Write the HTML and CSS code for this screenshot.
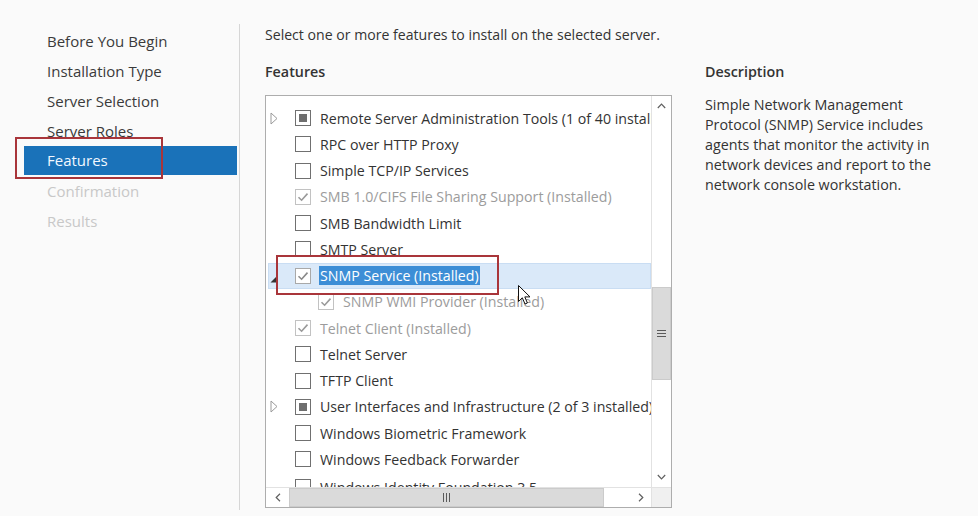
FILE: index.html
```html
<!DOCTYPE html>
<html>
<head>
<meta charset="utf-8">
<link rel="stylesheet" href="styles.css">
</head>
<body>
<div class="page">
  <nav class="nav">
    <div class="nav-item">Before You Begin</div>
    <div class="nav-item">Installation Type</div>
    <div class="nav-item">Server Selection</div>
    <div class="nav-item">Server Roles</div>
    <div class="nav-item active">Features</div>
    <div class="nav-item disabled">Confirmation</div>
    <div class="nav-item disabled">Results</div>
  </nav>
  <main class="main">
    <p class="intro">Select one or more features to install on the selected server.</p>
    <div class="cols">
      <section class="features">
        <h2 class="heading">Features</h2>
        <div class="listbox">
          <div class="list-content">
            <div class="row"><span class="exp"><svg width="8" height="13" viewBox="0 0 8 13"><path d="M1 1 L7 6.5 L1 12 Z" fill="none" stroke="#9a9a9a" stroke-width="1"/></svg></span><span class="cb partial"><i></i></span><span class="label">Remote Server Administration Tools (1 of 40 installed)</span></div>
            <div class="row"><span class="exp"></span><span class="cb"></span><span class="label">RPC over HTTP Proxy</span></div>
            <div class="row"><span class="exp"></span><span class="cb"></span><span class="label">Simple TCP/IP Services</span></div>
            <div class="row installed"><span class="exp"></span><span class="cb checked"><svg width="14" height="14" viewBox="0 0 14 14"><path d="M2.5 7.2 L5.6 10.2 L11.5 3.6" fill="none" stroke="#9a9a9a" stroke-width="1.6"/></svg></span><span class="label">SMB 1.0/CIFS File Sharing Support (Installed)</span></div>
            <div class="row"><span class="exp"></span><span class="cb"></span><span class="label">SMB Bandwidth Limit</span></div>
            <div class="row"><span class="exp"></span><span class="cb"></span><span class="label">SMTP Server</span></div>
            <div class="row selected"><span class="exp"><svg width="7" height="7" viewBox="0 0 7 7"><path d="M6.5 0.5 L6.5 6.5 L0.5 6.5 Z" fill="#333"/></svg></span><span class="cb checked sel-cb"><svg width="14" height="14" viewBox="0 0 14 14"><path d="M2.5 7.2 L5.6 10.2 L11.5 3.6" fill="none" stroke="#8a8a8a" stroke-width="1.6"/></svg></span><span class="label sel">SNMP Service (Installed)</span></div>
            <div class="row installed child"><span class="exp"></span><span class="cb checked"><svg width="14" height="14" viewBox="0 0 14 14"><path d="M2.5 7.2 L5.6 10.2 L11.5 3.6" fill="none" stroke="#9a9a9a" stroke-width="1.6"/></svg></span><span class="label">SNMP WMI Provider (Installed)</span></div>
            <div class="row installed"><span class="exp"></span><span class="cb checked"><svg width="14" height="14" viewBox="0 0 14 14"><path d="M2.5 7.2 L5.6 10.2 L11.5 3.6" fill="none" stroke="#9a9a9a" stroke-width="1.6"/></svg></span><span class="label">Telnet Client (Installed)</span></div>
            <div class="row"><span class="exp"></span><span class="cb"></span><span class="label">Telnet Server</span></div>
            <div class="row"><span class="exp"></span><span class="cb"></span><span class="label">TFTP Client</span></div>
            <div class="row"><span class="exp"><svg width="8" height="13" viewBox="0 0 8 13"><path d="M1 1 L7 6.5 L1 12 Z" fill="none" stroke="#9a9a9a" stroke-width="1"/></svg></span><span class="cb partial"><i></i></span><span class="label">User Interfaces and Infrastructure (2 of 3 installed)</span></div>
            <div class="row"><span class="exp"></span><span class="cb"></span><span class="label">Windows Biometric Framework</span></div>
            <div class="row"><span class="exp"></span><span class="cb"></span><span class="label">Windows Feedback Forwarder</span></div>
            <div class="row last"><span class="exp"></span><span class="cb"></span><span class="label">Windows Identity Foundation 3.5</span></div>
          </div>
          <div class="vscroll">
            <div class="sbtn"><svg width="9" height="6" viewBox="0 0 9 6"><path d="M0.8 5 L4.5 1.2 L8.2 5" fill="none" stroke="#606060" stroke-width="1.2"/></svg></div>
            <div class="vtrack">
              <div class="vthumb"><span class="grip-h"><i></i><i></i><i></i></span></div>
            </div>
            <div class="sbtn"><svg width="9" height="6" viewBox="0 0 9 6"><path d="M0.8 1 L4.5 4.8 L8.2 1" fill="none" stroke="#606060" stroke-width="1.2"/></svg></div>
          </div>
          <div class="hscroll">
            <div class="hbtn left"><svg width="6" height="9" viewBox="0 0 6 9"><path d="M5 0.8 L1.2 4.5 L5 8.2" fill="none" stroke="#606060" stroke-width="1.2"/></svg></div>
            <div class="htrack">
              <div class="hthumb"><span class="grip-v"><i></i><i></i><i></i></span></div>
            </div>
            <div class="hbtn right"><svg width="6" height="9" viewBox="0 0 6 9"><path d="M1 0.8 L4.8 4.5 L1 8.2" fill="none" stroke="#606060" stroke-width="1.2"/></svg></div>
          </div>
          <div class="corner"></div>
        </div>
      </section>
      <section class="desc">
        <h2 class="heading">Description</h2>
        <p class="desc-text">Simple Network Management Protocol (SNMP) Service includes agents that monitor the activity in network devices and report to the network console workstation.</p>
      </section>
    </div>
  </main>
</div>
<div class="annot annot-nav"></div>
<div class="annot annot-snmp"></div>
<svg class="cursor" width="14" height="21" viewBox="0 0 14 21"><path d="M0.5 0.5 L0.5 16.5 L4.3 12.8 L7 19 L9.4 18 L6.8 11.9 L12 11.9 Z" fill="#fff" stroke="#111" stroke-width="1" stroke-linejoin="round"/></svg>
</body>
</html>
```

FILE: styles.css
```css
html, body {
  margin: 0;
  padding: 0;
}
body {
  width: 978px;
  height: 516px;
  overflow: hidden;
  background: #fafafa;
  font-family: "Open Sans", "Noto Sans", sans-serif;
  font-size: 15px;
  color: #333;
  position: relative;
}
.page {
  display: flex;
  align-items: flex-start;
}
.nav {
  width: 240px;
  box-sizing: border-box;
  margin-top: 24px;
  height: 486px;
  padding-top: 2px;
  border-right: 1px solid #d6d6d6;
  flex: none;
}
.nav-item {
  height: 30px;
  line-height: 30px;
  margin-left: 24px;
  margin-right: 2px;
  padding-left: 23px;
  color: #3a3a3a;
  white-space: nowrap;
}
.nav-item.active {
  background: #1a72b9;
  color: #f2f8ff;
  height: 29px;
  line-height: 29px;
  margin-bottom: 1px;
}
.nav-item.disabled {
  color: #c8c8c8;
}
.main {
  padding-left: 25px;
  padding-top: 25px;
}
.intro {
  margin: 0;
  line-height: 20px;
  font-size: 14.1px;
  white-space: nowrap;
}
.cols {
  display: flex;
  margin-top: 17px;
}
.heading {
  margin: 0 0 13px;
  font-size: 14.3px;
  font-weight: 600;
  line-height: 20px;
  color: #333;
}
.listbox {
  display: grid;
  grid-template-columns: 385px 20px;
  grid-template-rows: 391px 20px;
  border: 1px solid #adadad;
  background: #fff;
  font-size: 14.2px;
}
.list-content {
  overflow: hidden;
  padding-top: 9px;
  box-sizing: border-box;
}
.row {
  height: 26.25px;
  display: flex;
  align-items: center;
  padding-left: 4px;
  white-space: nowrap;
  color: #333;
}
.row.last {
  padding-top: 3px;
  box-sizing: border-box;
}
.row.child {
  padding-left: 27px;
}
.row.installed {
  color: #9c9c9c;
}
.row.selected {
  margin-left: 2px;
  padding-left: 2px;
  background: #dae9f9;
  box-shadow: inset 0 0 0 1px #c9ddf3;
  color: #9c9c9c;
}
.exp {
  width: 25px;
  flex: none;
  display: flex;
  align-items: center;
}
.row.selected .exp {
  padding-top: 8px;
  box-sizing: border-box;
}
.cb {
  width: 16px;
  height: 16px;
  box-sizing: border-box;
  border: 1px solid #707070;
  margin-right: 9px;
  flex: none;
  display: flex;
  align-items: center;
  justify-content: center;
  background: #fff;
}
.cb.checked {
  border-color: #c2c2c2;
}
.cb.sel-cb {
  border-color: #a9a9a9;
}
.cb.partial i {
  display: block;
  width: 8px;
  height: 8px;
  background: #6e6e6e;
}
.label.sel {
  background: #3d8ed6;
  color: #fff;
  line-height: 19px;
  padding: 0 1px;
  margin-left: -1px;
}
.vscroll {
  display: flex;
  flex-direction: column;
  border-left: 1px solid #e2e2e2;
  box-sizing: border-box;
}
.sbtn {
  height: 20px;
  flex: none;
  display: flex;
  align-items: center;
  justify-content: center;
}
.vtrack {
  flex: 1;
  padding-top: 171px;
  box-sizing: border-box;
}
.vthumb {
  height: 93px;
  background: #dadada;
  border: 1px solid #cbcbcb;
  box-sizing: border-box;
  display: flex;
  align-items: center;
  justify-content: center;
}
.grip-h {
  display: flex;
  flex-direction: column;
  gap: 2px;
}
.grip-h i {
  display: block;
  width: 9px;
  height: 1px;
  background: #5a5a5a;
}
.hscroll {
  display: flex;
  border-top: 1px solid #e2e2e2;
  box-sizing: border-box;
}
.hbtn {
  flex: none;
  display: flex;
  align-items: center;
  justify-content: center;
}
.hbtn.left {
  width: 23px;
}
.hbtn.right {
  width: 20px;
}
.htrack {
  flex: 1;
}
.hthumb {
  width: 315px;
  height: 100%;
  background: #dadada;
  border: 1px solid #cbcbcb;
  box-sizing: border-box;
  display: flex;
  align-items: center;
  justify-content: center;
}
.grip-v {
  display: flex;
  gap: 2px;
}
.grip-v i {
  display: block;
  width: 1px;
  height: 9px;
  background: #5a5a5a;
}
.corner {
  background: #f0f0f0;
  border-left: 1px solid #e2e2e2;
  border-top: 1px solid #e2e2e2;
}
.desc {
  margin-left: 33px;
}
.desc-text {
  margin: 0;
  width: 240px;
  font-size: 14.3px;
  line-height: 20px;
  color: #333;
}
.annot {
  position: absolute;
  border: 2px solid #a9353a;
  box-sizing: border-box;
}
.annot-nav {
  left: 15px;
  top: 137px;
  width: 148px;
  height: 42px;
}
.annot-snmp {
  left: 276px;
  top: 255px;
  width: 223px;
  height: 40px;
}
.cursor {
  position: absolute;
  left: 518px;
  top: 285px;
}
```
